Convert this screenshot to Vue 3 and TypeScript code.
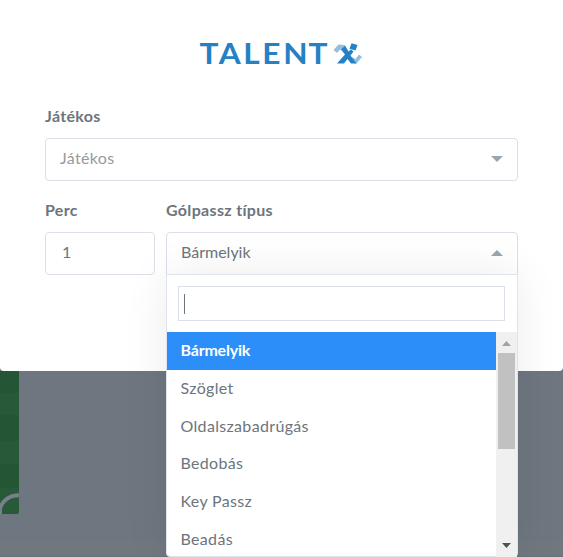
<script setup lang="ts">
import { ref } from 'vue'

const types: string[] = ['Bármelyik', 'Szöglet', 'Oldalszabadrúgás', 'Bedobás', 'Key Passz', 'Beadás']
const selected = ref<string>('Bármelyik')
const minute = ref<number>(1)
</script>

<template>
  <div class="screen">
    <div class="pitch">
      <svg width="19" height="143" viewBox="0 0 19 143">
        <rect width="19" height="143" fill="#235634" />
        <rect y="22" width="19" height="22" fill="#285939" />
        <rect y="70" width="19" height="23" fill="#285939" />
        <rect y="117" width="19" height="26" fill="#285939" />
        <path d="M0 143V138C2 130 9 124.300 19 124.300" fill="none" stroke="#777f88" stroke-width="4" />
      </svg>
    </div>
    <div class="floor"></div>
    <main class="modal">
      <header class="logo">
        <svg width="164" height="34" viewBox="0 -5 164 34">
          <text class="brand" transform="scale(1.130 1)" x="0.500 17.600 39.200 56 74.600 97" y="21.500">TALENT</text>
          <path d="M134.500 8L139.500 2.500L146 3L142 8.500L141 7.500L138 11Z" fill="#91bfe1" />
          <path d="M153 15L156.500 17L160 12.500L163 15L157.500 21.500H155Z" fill="#91bfe1" />
          <path d="M152.500 1.200L158.500 3L156.500 8.500L150.500 6.700Z" fill="#2581c4" />
          <path d="M142 7.500L146 3.500L149.500 9.500L152 7.500L154.500 9.500L151.500 13.500L157.500 21.500H152L148.500 17L145 21.500H138L146 12.500Z" fill="#2581c4" />
        </svg>
      </header>
      <section class="field">
        <label class="label">Játékos</label>
        <div class="control select">
          <span class="placeholder">Játékos</span>
          <i class="caret"></i>
        </div>
      </section>
      <div class="row">
        <section class="field minute">
          <label class="label">Perc</label>
          <div class="control number">{{ minute }}</div>
        </section>
        <section class="field type">
          <label class="label">Gólpassz típus</label>
          <div class="control select open">
            <span class="value">{{ selected }}</span>
            <i class="caret up"></i>
          </div>
          <div class="dropdown">
            <div class="search"><div class="search-box"><i class="cursor"></i></div></div>
            <div class="results">
              <ul class="options">
                <li v-for="t in types" :key="t" :class="{ active: t === selected }">{{ t }}</li>
              </ul>
              <div class="scrollbar">
                <svg class="arrow" width="21" height="21" viewBox="0 0 21 21"><path d="M6 14L10.500 9L15 14Z" fill="#a3a3a3" /></svg>
                <div class="thumb"></div>
                <svg class="arrow end" width="21" height="21" viewBox="0 0 21 21"><path d="M6 8L10.500 13L15 8Z" fill="#505050" /></svg>
              </div>
            </div>
          </div>
        </section>
      </div>
    </main>
  </div>
</template>

<style>
body { margin: 0; overflow: hidden; }
</style>

<style scoped>
* { box-sizing: border-box; }
.screen {
  position: relative;
  width: 563px;
  height: 557px;
  overflow: hidden;
  background: #6e767f;
  color: #6c757d;
  font: 16px/24px Lato, "Open Sans", sans-serif;
  letter-spacing: 0.330px;
}
.pitch { position: absolute; left: 0; top: 371px; height: 143px; border-radius: 0 0 3px; overflow: hidden; }
.pitch svg { display: block; }
.floor { position: absolute; left: 0; right: 0; bottom: 0; height: 16px; background: #70777f; border-bottom: 1px solid #68707a; }
.modal { position: relative; height: 371px; padding: 37px 45px 0; background: #fff; border-radius: 0 0 4px 4px; }
.logo { height: 67px; padding-left: 154px; }
.logo svg { display: block; }
.brand { font: 700 28px Lato, sans-serif; fill: #2581c4; letter-spacing: 0; }
.label { display: block; height: 34px; font-weight: 700; }
.control { display: flex; align-items: center; height: 43px; padding: 0 14px 3px; border: 1px solid #dcdfe7; border-radius: 4px; }
.select { justify-content: space-between; }
.placeholder { color: #999; }
.value { letter-spacing: 0; }
.number { padding-left: 16px; }
.caret { width: 0; height: 0; margin-top: 2px; border: 6px solid transparent; border-top-color: #98a6ad; border-bottom: 0; }
.caret.up { border-top: 0; border-bottom: 6px solid #98a6ad; }
.row { display: flex; gap: 11px; margin-top: 17px; }
.minute { width: 110px; }
.type { position: relative; width: 352px; }
.open { border-radius: 4px 4px 0 0; }
.dropdown {
  position: absolute;
  left: 0;
  top: 76px;
  width: 352px;
  height: 283px;
  border: 1px solid #dee4ec;
  border-radius: 0 0 4px 4px;
  background: #fff;
  box-shadow: 0 0 45px rgba(0, 0, 0, 0.080);
}
.search { height: 57px; padding: 11px 12px 0 11px; }
.search-box { height: 35px; padding: 7px 5px; border: 1px solid #dcdfe7; }
.cursor { display: block; width: 1px; height: 20px; background: #6c757d; }
.results { display: flex; height: 225px; }
.options { flex: 1; margin: 0; padding: 0; list-style: none; overflow: hidden; }
.options li { height: 37.800px; padding: 6px 14px 6px 13.500px; }
.options .active { background: #2c8ef8; color: #fff; font-weight: 700; letter-spacing: -0.200px; }
.scrollbar { display: flex; flex-direction: column; width: 21px; background: #f0f0f0; }
.arrow { display: block; }
.arrow.end { margin-top: auto; margin-bottom: 1px; }
.thumb { height: 96px; margin: 0 2px; background: #c1c1c1; }
</style>
